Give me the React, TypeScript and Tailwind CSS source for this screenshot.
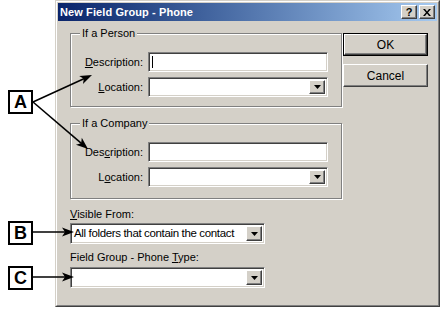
import React from 'react';

const font = "font-['Liberation_Sans',Arial,sans-serif]";

// classic win2k bevels
const raised =
  'border border-t-white border-l-white border-b-[#404040] border-r-[#404040] shadow-[inset_-1px_-1px_0_#808080] bg-[#d4d0c8]';
const sunken =
  'border border-t-[#808080] border-l-[#808080] border-b-white border-r-white shadow-[inset_1px_1px_0_#404040,inset_-1px_-1px_0_#d4d0c8] bg-white';

function DropArrow() {
  return (
    <svg width="7" height="4" viewBox="0 0 7 4">
      <path d="M0 0h7L3.5 4z" fill="#000" />
    </svg>
  );
}

function TextBox({ w, cursor }: { w: string; cursor?: boolean }) {
  return (
    <div className={`${sunken} ${w} h-[20px] relative`}>
      {cursor && <div className="absolute left-[3px] top-[3px] w-px h-[12px] bg-black" />}
    </div>
  );
}

function Combo({ w, h, value }: { w: string; h: string; value?: string }) {
  return (
    <div className={`${sunken} ${w} ${h} flex items-center p-[2px]`}>
      <span className="flex-1 pl-px text-[11.5px] tracking-[-0.35px] leading-none text-black whitespace-nowrap overflow-hidden">
        {value}
      </span>
      <div className={`${raised} w-[16px] h-full flex items-center justify-center`}>
        <DropArrow />
      </div>
    </div>
  );
}

function Ul({ children }: { children: React.ReactNode }) {
  return <span className="underline underline-offset-[1px]">{children}</span>;
}

function Row({ label, children }: { label: React.ReactNode; children: React.ReactNode }) {
  return (
    <div className="flex items-center justify-end gap-[5px] pr-[13px]">
      <span className="text-[11px] text-black">{label}</span>
      {children}
    </div>
  );
}

function GroupBox({ title, h, children }: { title: string; h: string; children: React.ReactNode }) {
  return (
    <div className={`relative ${h} border border-[#808080] shadow-[inset_1px_1px_0_white,1px_1px_0_white] pt-[18px] flex flex-col gap-[5px]`}>
      <span className="absolute left-[9px] -top-[7px] px-[2px] bg-[#d4d0c8] text-[11px] leading-[13px] text-black">
        {title}
      </span>
      {children}
    </div>
  );
}

function Arrow({ x1, y1, x2, y2 }: { x1: number; y1: number; x2: number; y2: number }) {
  const dx = x2 - x1;
  const dy = y2 - y1;
  const len = Math.hypot(dx, dy);
  const ux = dx / len;
  const uy = dy / len;
  const hl = 12;
  const hw = 4.5;
  const bx = x2 - ux * hl;
  const by = y2 - uy * hl;
  const pts = `${x2},${y2} ${bx - uy * hw},${by + ux * hw} ${x2 - ux * (hl - 3)},${y2 - uy * (hl - 3)} ${bx + uy * hw},${by - ux * hw}`;
  return (
    <g>
      <line x1={x1} y1={y1} x2={x2 - ux * 6} y2={y2 - uy * 6} stroke="#000" strokeWidth="1.6" />
      <polygon points={pts} fill="#000" />
    </g>
  );
}

function Callout({ letter, top }: { letter: string; top: string }) {
  return (
    <div
      className={`absolute left-[8px] ${top} w-[25px] h-[24px] border-2 border-black bg-white flex items-center justify-center text-[18px] font-bold text-black leading-none`}
    >
      {letter}
    </div>
  );
}

export default function App() {
  return (
    <div className={`relative w-[441px] h-[309px] bg-white overflow-hidden ${font}`}>
      {/* dialog */}
      <div className="ml-[55px] w-[385px] h-[307px] border border-t-[#d4d0c8] border-l-[#d4d0c8] border-b-[#404040] border-r-[#404040]">
        <div className="h-full border border-t-white border-l-white border-b-[#808080] border-r-[#808080] bg-[#d4d0c8] p-px flex flex-col">
          {/* title bar */}
          <div className="h-[18px] flex items-center pl-[2px] pr-[2px] bg-gradient-to-r from-[#0a246a] to-[#a6caf0]">
            <span className="flex-1 text-[11px] font-bold text-white tracking-[0.1px]">New Field Group - Phone</span>
            <div className={`${raised} w-[16px] h-[14px] flex items-center justify-center text-[11px] font-bold leading-none text-black`}>?</div>
            <div className={`${raised} ml-[2px] w-[16px] h-[14px] flex items-center justify-center`}>
              <svg width="8" height="7" viewBox="0 0 8 7">
                <path d="M0 0h2l2 2.5L6 0h2L5 3.5 8 7H6L4 4.5 2 7H0l3-3.5z" fill="#000" />
              </svg>
            </div>
          </div>

          {/* body */}
          <div className="flex pl-[12px] pt-[12px]">
            <div className="w-[272px] flex flex-col">
              <GroupBox title="If a Person" h="h-[74px]">
                <Row label={<><Ul>D</Ul>escription:</>}>
                  <TextBox w="w-[180px]" cursor />
                </Row>
                <Row label={<><Ul>L</Ul>ocation:</>}>
                  <Combo w="w-[180px]" h="h-[20px]" />
                </Row>
              </GroupBox>

              <div className="mt-[16px]">
                <GroupBox title="If a Company" h="h-[76px]">
                  <Row label={<>Des<Ul>c</Ul>ription:</>}>
                    <TextBox w="w-[180px]" />
                  </Row>
                  <Row label={<>L<Ul>o</Ul>cation:</>}>
                    <Combo w="w-[180px]" h="h-[20px]" />
                  </Row>
                </GroupBox>
              </div>

              <span className="mt-[9px] text-[11px] leading-[13px] text-black">
                <Ul>V</Ul>isible From:
              </span>
              <div className="mt-[2px]">
                <Combo w="w-[195px]" h="h-[21px]" value="All folders that contain the contact" />
              </div>

              <span className="mt-[7px] text-[11px] leading-[13px] text-black">
                Field Group - Phone <Ul>T</Ul>ype:
              </span>
              <div className="mt-[3px]">
                <Combo w="w-[195px]" h="h-[21px]" />
              </div>
            </div>

            <div className="ml-px flex flex-col gap-[8px]">
              <div className="border border-black">
                <div className={`${raised} w-[83px] h-[21px] flex items-center justify-center text-[12px] text-black`}>OK</div>
              </div>
              <div className={`${raised} w-[85px] h-[23px] flex items-center justify-center text-[12px] text-black`}>Cancel</div>
            </div>
          </div>
        </div>
      </div>

      {/* annotations */}
      <svg className="absolute inset-0 pointer-events-none" width="441" height="309">
        <Arrow x1={33} y1={102} x2={92} y2={75} />
        <Arrow x1={33} y1={102} x2={88} y2={149} />
        <Arrow x1={33} y1={232} x2={74} y2={232} />
        <Arrow x1={33} y1={277} x2={74} y2={277} />
      </svg>
      <Callout letter="A" top="top-[90px]" />
      <Callout letter="B" top="top-[221px]" />
      <Callout letter="C" top="top-[266px]" />
    </div>
  );
}
